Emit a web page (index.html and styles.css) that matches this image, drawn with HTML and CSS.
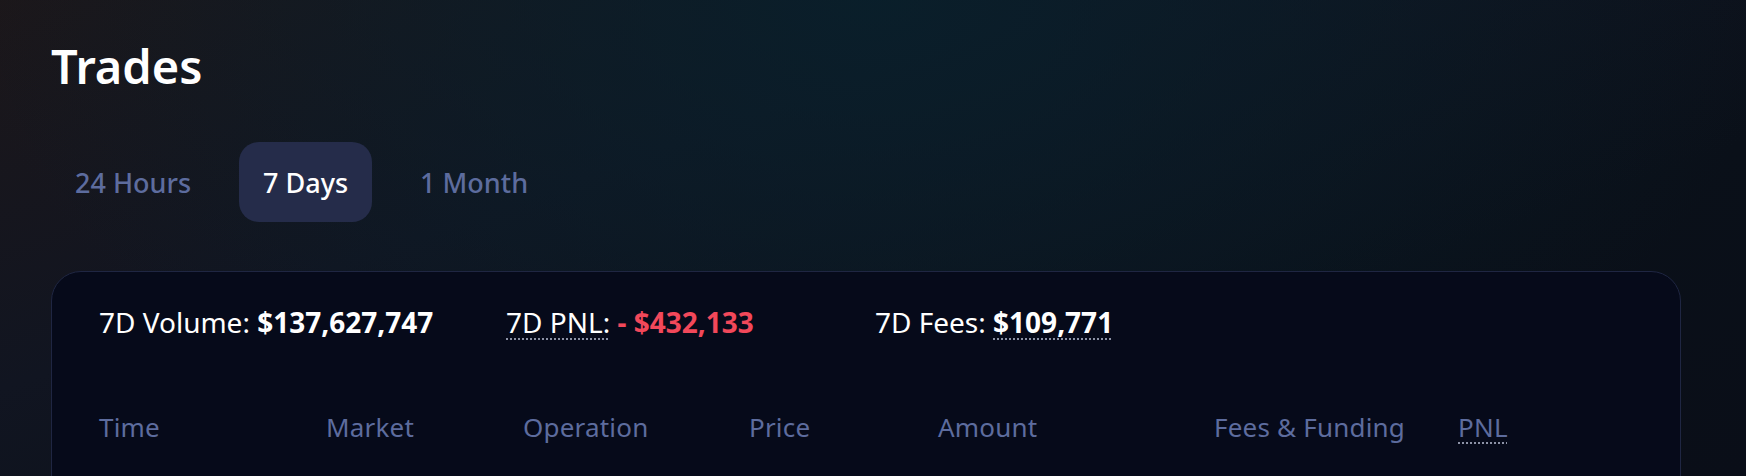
FILE: index.html
```html
<!DOCTYPE html>
<html lang="en">

    <head>
        <meta charset="UTF-8">
        <meta name="viewport" content="width=device-width, initial-scale=1.0">
        <title>Trades</title>
        <link rel="stylesheet" href="styles.css">
    </head>

    <body>
        <div class="page">
            <h1>Trades</h1>
            <div class="tabs">
                <button class="tab">24 Hours</button>
                <button class="tab active">7 Days</button>
                <button class="tab">1 Month</button>
            </div>
            <div class="card">
                <div class="stats">
                    <p class="stat">7D Volume: <b>$137,627,747</b></p>
                    <p class="stat"><span class="hint">7D PNL:</span> <b class="loss">- $432,133</b></p>
                    <p class="stat">7D Fees: <b class="hint">$109,771</b></p>
                </div>
                <div class="table-head">
                    <span>Time</span>
                    <span>Market</span>
                    <span>Operation</span>
                    <span>Price</span>
                    <span>Amount</span>
                    <span>Fees &amp; Funding</span>
                    <span class="hint">PNL</span>
                </div>
            </div>
        </div>
    </body>

</html>
```

FILE: styles.css
```css
* {
    margin: 0;
    padding: 0;
    box-sizing: border-box;
    font-family: 'Noto Sans', sans-serif;
}

html,
body {
    height: 100%;
}

body {
    overflow: hidden;
    color: #ffffff;
    background-color: #0b111c;
    background-image:
        radial-gradient(ellipse 900px 520px at 50% 0%, rgba(8, 32, 44, 0.85), rgba(8, 32, 44, 0) 100%),
        linear-gradient(160deg, #1c171a 0%, #111521 35%, #0a1019 70%, #0a0e18 100%);
}

.page {
    padding: 38px 65px 0 51px;
}

h1 {
    font-size: 47px;
    font-weight: 600;
    line-height: 56px;
    color: #ffffff;
}

.tabs {
    display: flex;
    gap: 24px;
    margin-top: 48px;
}

.tab {
    height: 80px;
    padding: 0 24px;
    border: none;
    border-radius: 20px;
    background: none;
    font-size: 27px;
    font-weight: 500;
    color: #5d6c9e;
    cursor: pointer;
}

.tab.active {
    background-color: #252c4a;
    color: #ffffff;
}

.card {
    margin-top: 49px;
    min-height: 400px;
    padding: 32px 47px 0;
    border: 1px solid #1f2642;
    border-radius: 30px;
    background-color: #060a1a;
}

.stats {
    display: grid;
    grid-template-columns: 407px 369px auto;
}

.stat {
    font-size: 28px;
    line-height: 36px;
    font-weight: 400;
    color: #ffffff;
}

.stat b {
    font-weight: 700;
}

.loss {
    color: #f2485a;
}

.hint {
    text-decoration: underline dotted #8c92a6;
    text-decoration-thickness: 2px;
    text-underline-offset: 5px;
}

.table-head {
    display: grid;
    grid-template-columns: 227px 197px 226px 189px 276px 244px 1fr;
    margin-top: 69px;
    font-size: 26px;
    letter-spacing: 0.2px;
    line-height: 36px;
    color: #5d6c9e;
}
```
